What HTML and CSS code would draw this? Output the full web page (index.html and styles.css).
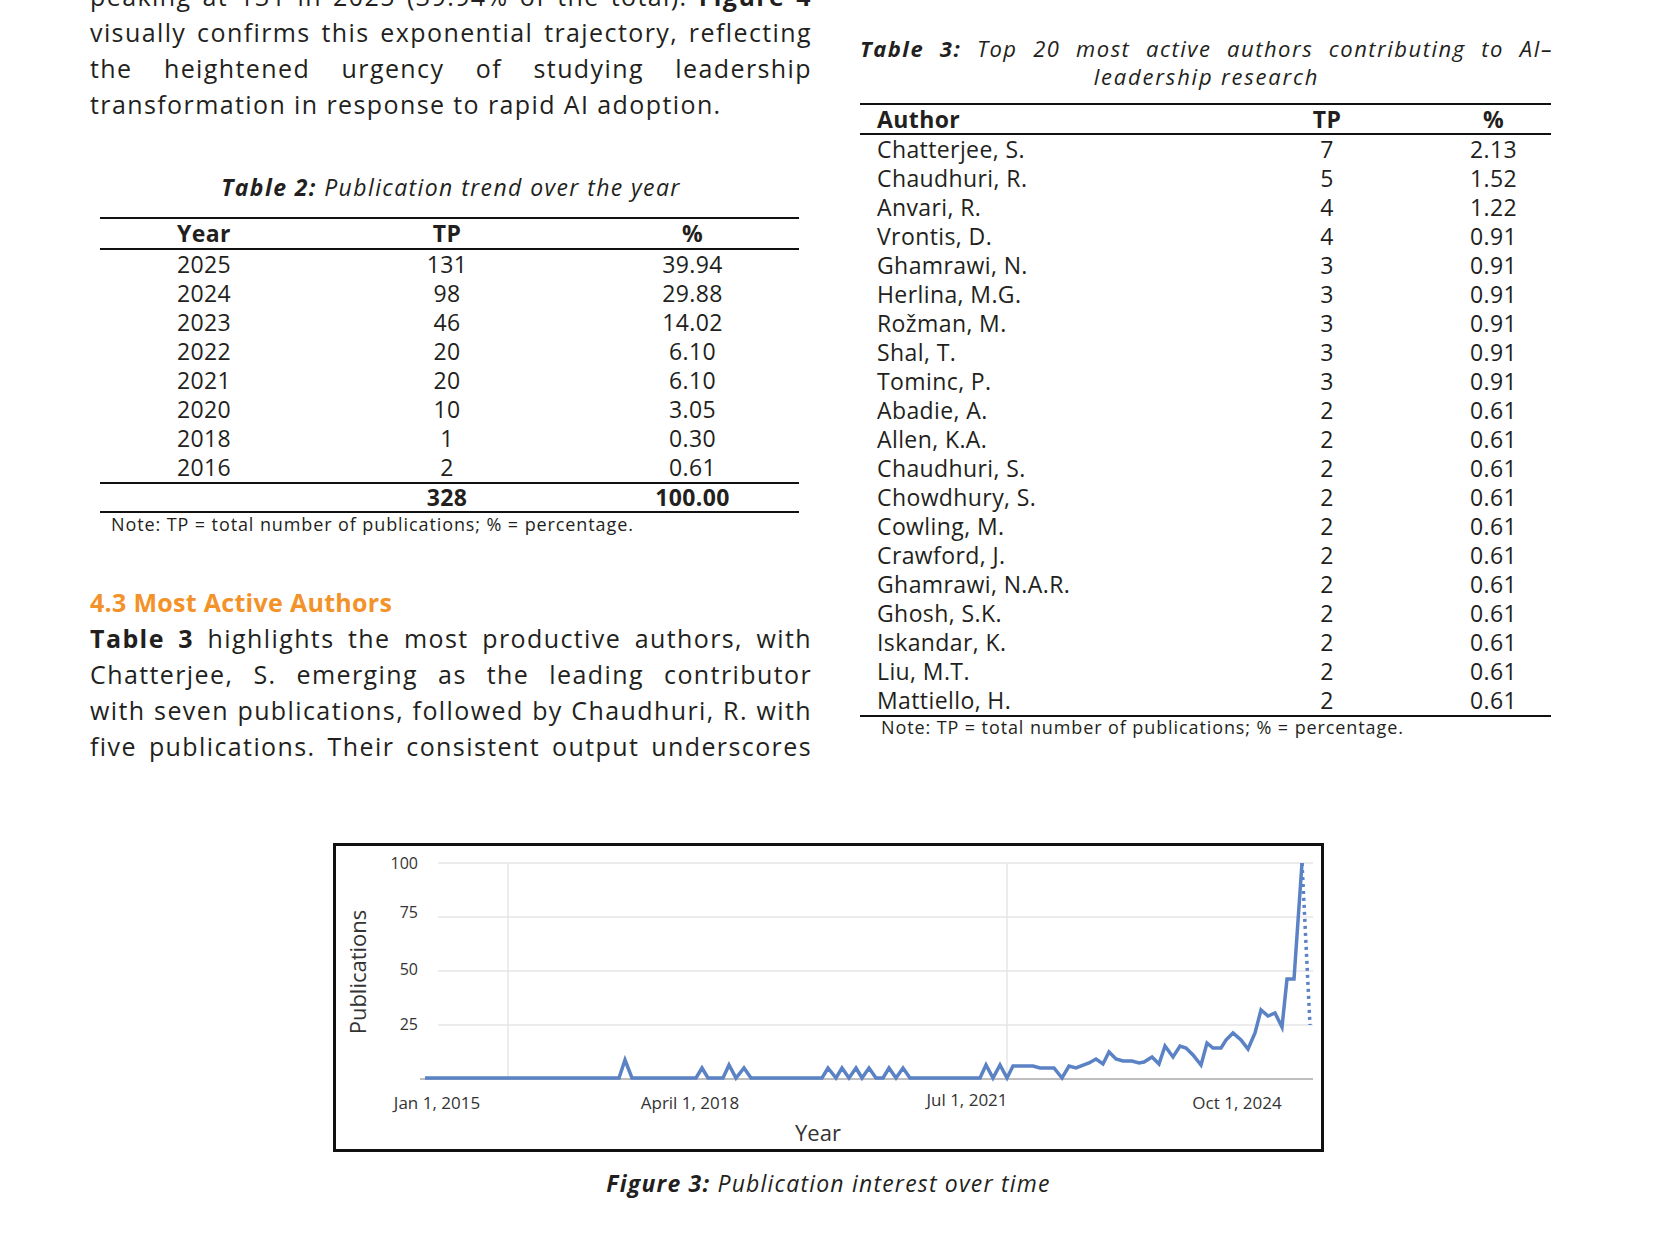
FILE: index.html
```html
<!DOCTYPE html>
<html lang="en">
<head>
    <meta charset="UTF-8">
    <meta name="viewport" content="width=device-width, initial-scale=1.0">
    <title>Most Active Authors</title>
    <link rel="stylesheet" href="styles.css">
</head>
<body>
    <div class="page">
        <div class="columns">
            <section class="col-left">
                <p class="text cut">
                    <span class="ln">peaking at 131 in 2025 (39.94% of the total). <b>Figure 4</b></span>
                    <span class="ln">visually confirms this exponential trajectory, reflecting</span>
                    <span class="ln">the heightened urgency of studying leadership</span>
                    <span class="ln last">transformation in response to rapid AI adoption.</span>
                </p>

                <p class="caption t2-caption"><b>Table 2:</b> Publication trend over the year</p>
                <table class="data t2">
                    <colgroup>
                        <col class="c-year">
                        <col class="c-tp">
                        <col class="c-pct">
                    </colgroup>
                    <thead>
                        <tr><th>Year</th><th>TP</th><th>%</th></tr>
                    </thead>
                    <tbody>
                        <tr><td>2025</td><td>131</td><td>39.94</td></tr>
                        <tr><td>2024</td><td>98</td><td>29.88</td></tr>
                        <tr><td>2023</td><td>46</td><td>14.02</td></tr>
                        <tr><td>2022</td><td>20</td><td>6.10</td></tr>
                        <tr><td>2021</td><td>20</td><td>6.10</td></tr>
                        <tr><td>2020</td><td>10</td><td>3.05</td></tr>
                        <tr><td>2018</td><td>1</td><td>0.30</td></tr>
                        <tr><td>2016</td><td>2</td><td>0.61</td></tr>
                    </tbody>
                    <tfoot>
                        <tr><td></td><td>328</td><td>100.00</td></tr>
                    </tfoot>
                </table>
                <p class="note note-left">Note: TP = total number of publications; % = percentage.</p>

                <h3 class="section-title">4.3 Most Active Authors</h3>
                <p class="text">
                    <span class="ln"><b>Table 3</b> highlights the most productive authors, with</span>
                    <span class="ln">Chatterjee, S. emerging as the leading contributor</span>
                    <span class="ln">with seven publications, followed by Chaudhuri, R. with</span>
                    <span class="ln">five publications. Their consistent output underscores</span>
                </p>
            </section>

            <section class="col-right">
                <p class="caption t3-caption">
                    <span class="ln"><b>Table 3:</b> Top 20 most active authors contributing to AI&ndash;</span>
                    <span class="ln center">leadership research</span>
                </p>
                <table class="data t3">
                    <colgroup>
                        <col class="c-author">
                        <col class="c-tp3">
                        <col class="c-pct3">
                    </colgroup>
                    <thead>
                        <tr><th>Author</th><th>TP</th><th>%</th></tr>
                    </thead>
                    <tbody>
                        <tr><td>Chatterjee, S.</td><td>7</td><td>2.13</td></tr>
                        <tr><td>Chaudhuri, R.</td><td>5</td><td>1.52</td></tr>
                        <tr><td>Anvari, R.</td><td>4</td><td>1.22</td></tr>
                        <tr><td>Vrontis, D.</td><td>4</td><td>0.91</td></tr>
                        <tr><td>Ghamrawi, N.</td><td>3</td><td>0.91</td></tr>
                        <tr><td>Herlina, M.G.</td><td>3</td><td>0.91</td></tr>
                        <tr><td>Rožman, M.</td><td>3</td><td>0.91</td></tr>
                        <tr><td>Shal, T.</td><td>3</td><td>0.91</td></tr>
                        <tr><td>Tominc, P.</td><td>3</td><td>0.91</td></tr>
                        <tr><td>Abadie, A.</td><td>2</td><td>0.61</td></tr>
                        <tr><td>Allen, K.A.</td><td>2</td><td>0.61</td></tr>
                        <tr><td>Chaudhuri, S.</td><td>2</td><td>0.61</td></tr>
                        <tr><td>Chowdhury, S.</td><td>2</td><td>0.61</td></tr>
                        <tr><td>Cowling, M.</td><td>2</td><td>0.61</td></tr>
                        <tr><td>Crawford, J.</td><td>2</td><td>0.61</td></tr>
                        <tr><td>Ghamrawi, N.A.R.</td><td>2</td><td>0.61</td></tr>
                        <tr><td>Ghosh, S.K.</td><td>2</td><td>0.61</td></tr>
                        <tr><td>Iskandar, K.</td><td>2</td><td>0.61</td></tr>
                        <tr><td>Liu, M.T.</td><td>2</td><td>0.61</td></tr>
                        <tr><td>Mattiello, H.</td><td>2</td><td>0.61</td></tr>
                    </tbody>
                </table>
                <p class="note note-right">Note: TP = total number of publications; % = percentage.</p>
            </section>
        </div>

        <figure class="figure">
            <div class="chart">
                <svg width="985" height="303" viewBox="0 0 985 303">
                    <!-- grid -->
                    <g class="grid">
                        <line x1="102" y1="17" x2="977" y2="17"/>
                        <line x1="102" y1="71" x2="977" y2="71"/>
                        <line x1="102" y1="125" x2="977" y2="125"/>
                        <line x1="102" y1="179" x2="977" y2="179"/>
                        <line x1="172" y1="17" x2="172" y2="233"/>
                        <line x1="671" y1="17" x2="671" y2="233"/>
                    </g>
                    <line class="axis" x1="84" y1="233" x2="977" y2="233"/>

                    <g class="tick-y">
                        <text x="82" y="23">100</text>
                        <text x="82" y="72">75</text>
                        <text x="82" y="129">50</text>
                        <text x="82" y="184">25</text>
                    </g>
                    <text class="label-y" transform="translate(30 126) rotate(-90)">Publications</text>

                    <g class="tick-x">
                        <text x="101" y="263">Jan 1, 2015</text>
                        <text x="354" y="263">April 1, 2018</text>
                        <text x="631" y="260">Jul 1, 2021</text>
                        <text x="901" y="263">Oct 1, 2024</text>
                    </g>
                    <text class="label-x" x="482" y="295">Year</text>

                    <polyline class="trend" points="89,232 283,232 289,214 296,232 360,232 366,222 372,232 387,232 393,219 400,232 408,222 415,232 486,232 492,222 500,232 506,222 513,232 520,222 526,232 533,222 540,232 547,232 553,222 560,232 567,222 574,232 644,232 650,219 657,232 664,219 671,232 677,220 697,220 704,222 718,222 726,232 733,220 740,222 753,217 760,213 767,218 773,206 780,213 787,215 796,215 803,217 808,216 816,211 823,218 829,200 837,211 844,200 850,202 857,209 865,219 871,197 877,202 885,202 890,194 897,187 905,194 912,203 919,187 925,164 932,170 939,167 946,181 951,133 958,133 966,17"/>
                    <line class="trend-dotted" x1="966" y1="17" x2="974" y2="179"/>
                </svg>
            </div>
            <figcaption class="caption fig-caption"><b>Figure 3:</b> Publication interest over time</figcaption>
        </figure>
    </div>
</body>
</html>
```

FILE: styles.css
```css
body {
    margin: 0;
    font-family: "Open Sans", "DejaVu Sans", sans-serif;
    color: #231f20;
    background-color: #fff;
}
.page {
    width: 1660px;
    overflow: hidden;
}
.columns {
    display: flex;
    gap: 48px;
    padding-left: 90px;
}
.col-left {
    width: 722px;
}
.col-right {
    width: 691px;
}

/* running text, one span per printed line */
.text {
    margin: 0;
    font-size: 25px;
    line-height: 36px;
    letter-spacing: 1.4px;
}
.text .ln {
    display: block;
    text-align: justify;
    text-align-last: justify;
}
.text .ln.last {
    text-align-last: left;
}
.text b {
    font-weight: 700;
}
.cut {
    margin-top: -22px;
}

/* captions */
.caption {
    margin: 0;
    font-style: italic;
    font-size: 23px;
    letter-spacing: 1.2px;
}
.caption b {
    font-weight: 700;
}
.t2-caption {
    margin-top: 50px;
    line-height: 30px;
    text-align: center;
    letter-spacing: 1.4px;
}
.t3-caption {
    margin-top: 34px;
    line-height: 28px;
    width: 693px;
    font-size: 22px;
    letter-spacing: 1.5px;
}
.t3-caption .ln {
    display: block;
    text-align: justify;
    text-align-last: justify;
}
.t3-caption .ln.center {
    text-align: center;
    text-align-last: center;
    letter-spacing: 1.8px;
}

/* tables */
.data {
    border-collapse: separate;
    border-spacing: 0;
    font-size: 23px;
    letter-spacing: 0.4px;
}
.data th,
.data td {
    padding: 0;
    text-align: center;
    line-height: 29px;
}
.data th {
    font-weight: 700;
    border-top: 2px solid #111;
    border-bottom: 2px solid #111;
}
.t2 {
    margin: 15px 0 0 10px;
    width: 699px;
}
.t2 .c-year { width: 208px; }
.t2 .c-tp { width: 278px; }
.t2 .c-pct { width: 213px; }
.t2 tfoot td {
    font-weight: 700;
    line-height: 27px;
    border-top: 2px solid #111;
    border-bottom: 2px solid #111;
}

.t3 {
    margin-top: 13px;
    width: 691px;
}
.t3 th {
    line-height: 28px;
}
.t3 .c-author { width: 410px; }
.t3 .c-tp3 { width: 114px; }
.t3 .c-pct3 { width: 167px; }
.t3 th:first-child,
.t3 td:first-child {
    text-align: left;
    padding-left: 17px;
}
.t3 th:last-child,
.t3 td:last-child {
    padding-left: 52px;
}
.t3 tbody tr:last-child td {
    border-bottom: 2px solid #111;
}

.note {
    margin: 0;
    font-size: 18px;
    letter-spacing: 0.9px;
}
.note-left {
    line-height: 22px;
    padding-left: 21px;
}
.note-right {
    line-height: 20px;
    padding-left: 21px;
}

.section-title {
    margin: 49px 0 0 0;
    font-size: 25px;
    line-height: 36px;
    font-weight: 700;
    letter-spacing: 0.3px;
    color: #f39229;
}

/* figure */
.figure {
    margin: 79px 0 0 333px;
    width: 991px;
}
.chart {
    border: 3px solid #111;
    height: 303px;
}
.chart svg {
    display: block;
}
.grid line {
    stroke: #e6e6e6;
    stroke-width: 1.5;
}
.axis {
    stroke: #a8a8a8;
    stroke-width: 1.5;
}
.tick-y text {
    font-family: "Open Sans", sans-serif;
    font-size: 16px;
    fill: #333;
    text-anchor: end;
}
.tick-x text {
    font-family: "Open Sans", sans-serif;
    font-size: 17px;
    fill: #333;
    text-anchor: middle;
}
.label-y,
.label-x {
    font-family: "Open Sans", sans-serif;
    font-size: 22px;
    fill: #333;
    text-anchor: middle;
}
.trend {
    fill: none;
    stroke: #5a82c4;
    stroke-width: 3.5;
    stroke-linejoin: miter;
}
.trend-dotted {
    stroke: #5a82c4;
    stroke-width: 3.5;
    stroke-dasharray: 3 4;
}
.fig-caption {
    margin-top: 16px;
    line-height: 30px;
    text-align: center;
}
```
